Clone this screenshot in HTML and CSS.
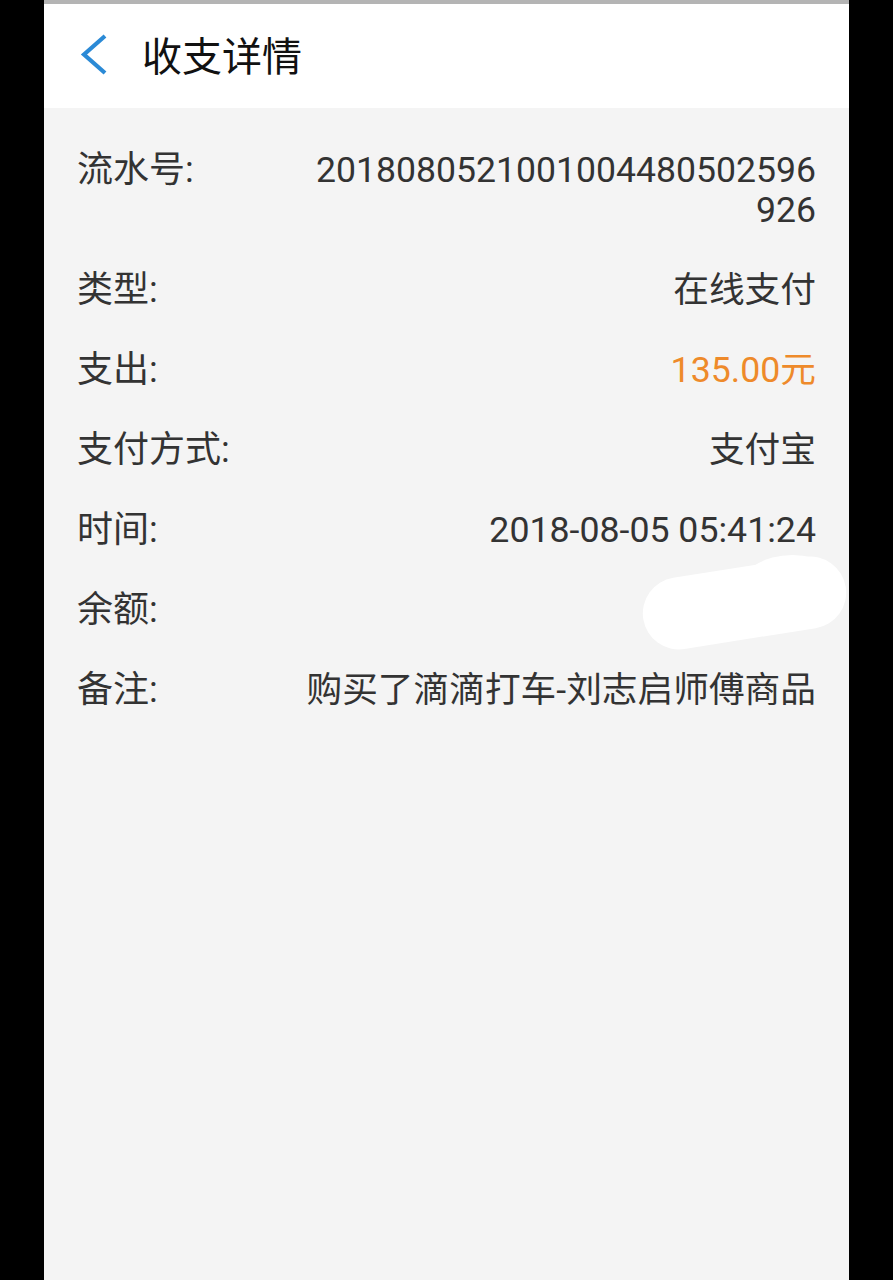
FILE: index.html
```html
<!DOCTYPE html>
<html lang="zh">
<head>
<meta charset="utf-8">
<link rel="stylesheet" href="styles.css">
</head>
<body>
<div class="screen">
  <div class="topline"></div>
  <header class="bar">
    <svg class="back" width="30" height="44" viewBox="0 0 30 44"><path d="M25 3 L4 21.5 L25 40" fill="none" stroke="#2b8ad6" stroke-width="4.2" stroke-linejoin="miter"/></svg>
    <h1 class="title">收支详情</h1>
  </header>
  <main class="list">
    <div class="row"><span class="label">流水号:</span><span class="value num">2018080521001004480502596 926</span></div>
    <div class="row"><span class="label">类型:</span><span class="value">在线支付</span></div>
    <div class="row"><span class="label">支出:</span><span class="value orange">135.00元</span></div>
    <div class="row"><span class="label">支付方式:</span><span class="value">支付宝</span></div>
    <div class="row"><span class="label">时间:</span><span class="value">2018-08-05 05:41:24</span></div>
    <div class="row"><span class="label">余额:</span><span class="value"></span></div>
    <div class="row"><span class="label">备注:</span><span class="value">购买了滴滴打车-刘志启师傅商品</span></div>
    <div class="blob b1"></div>
    <div class="blob b2"></div>
  </main>
</div>
</body>
</html>
```

FILE: styles.css
```css
html, body {
  margin: 0;
  padding: 0;
  background: #000;
  height: 1280px;
  overflow: hidden;
}
.screen {
  width: 805px;
  height: 1280px;
  margin-left: 44px;
  background: #f4f4f4;
  display: flex;
  flex-direction: column;
  font-family: Roboto, "Noto Sans CJK SC", sans-serif;
  color: #333;
}
.topline {
  height: 4px;
  background: #b4b4b4;
}
.bar {
  height: 104px;
  background: #fff;
  display: flex;
  align-items: center;
  padding-left: 36px;
  box-sizing: border-box;
}
.back {
  display: block;
  margin-top: -2px;
}
.title {
  margin: 0 0 0 32px;
  font-family: "Noto Sans CJK SC", sans-serif;
  font-weight: 400;
  font-size: 40px;
  color: #111;
  line-height: 1;
  margin-top: -4px;
}
.list {
  position: relative;
  padding: 22px 33px 0 33px;
  flex: 1;
}
.row {
  display: flex;
  justify-content: space-between;
  align-items: baseline;
  padding: 20px 0;
  font-size: 35.7px;
  line-height: 40px;
}
.label {
  flex: none;
  white-space: nowrap;
  font-size: 36px;
}
.value {
  text-align: right;
  white-space: nowrap;
}
.num {
  white-space: normal;
  width: 504px;
  font-size: 35.6px;
}
.orange {
  color: #ee8a2a;
}
.blob {
  position: absolute;
  background: #fff;
}
.b1 {
  left: 598px;
  top: 459px;
  width: 205px;
  height: 72px;
  border-radius: 36px;
  transform: rotate(-9deg);
}
.b2 {
  left: 696px;
  top: 447px;
  width: 105px;
  height: 68px;
  border-radius: 50%;
}
```
